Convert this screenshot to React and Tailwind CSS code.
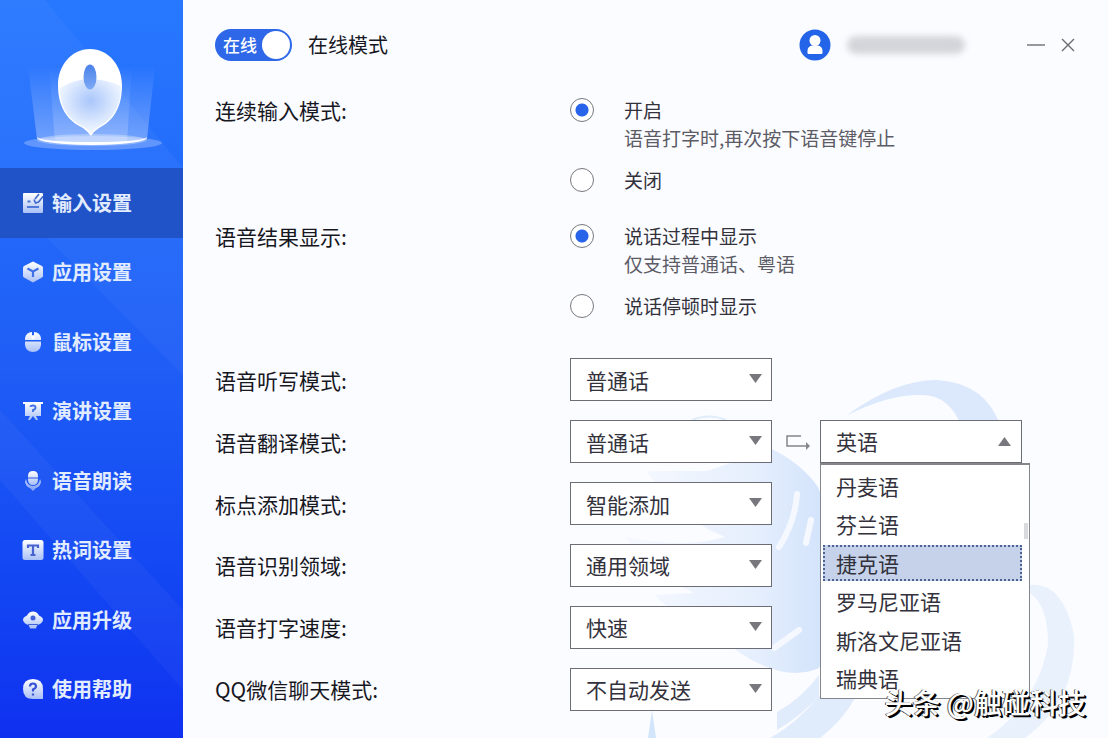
import { useState } from "react";
import clsx from "clsx";

const iconProps = {
  width: 22,
  height: 22,
  viewBox: "0 0 22 22",
  fill: "url(#iconFill)",
  "aria-hidden": true,
};

const icons = {
  input: (
    <svg {...iconProps}>
      <rect x="1" y="1" width="20" height="20" rx="1" />
      <path d="M5 15h12" stroke="#5078d8" strokeWidth="2" />
      <path d="M5.500 9.500h3" stroke="#4a70d0" strokeWidth="2" />
      <path d="m12 7.500 1.500 3.500 3-1L21 4.500M13 7l4-5" stroke="#3f68cc" strokeWidth="1.600" fill="none" />
    </svg>
  ),
  cube: (
    <svg {...iconProps}>
      <path d="M11 0.500 20 5Q21 5.500 21 7v8q0 1-1 1.500L11 21.500 2 16.500Q1 16 1 15V7Q1 5.500 2 5Z" />
      <path d="m5.500 7.500 5.500 3 5.500-3M11 10.500V16" stroke="#3f70e6" strokeWidth="2.200" fill="none" />
    </svg>
  ),
  mouse: (
    <svg {...iconProps}>
      <path d="M10 1v8H3V7q1-5.500 7-6ZM12 1v8h7V7q-1-5.500-7-6ZM3 10.500h16V14q-1 7-8 7t-8-7Z" />
      <rect x="9.500" y="4" width="3" height="5" rx="1.500" fill="#fff" />
    </svg>
  ),
  board: (
    <svg {...iconProps}>
      <path d="M1 2h20v2h-2v12h-5l2 4h-2l-3-4-3 4H6l2-4H3V4H1Z" />
      <path d="M8.500 7q0-1.500 2.500-1.500T13.500 7.500 11 10v2" stroke="#3f70e6" strokeWidth="1.800" fill="none" />
    </svg>
  ),
  mic: (
    <svg {...iconProps}>
      <path d="M11 1q5 0 5 5v3q0 6-5 6t-5-6V6q0-5 5-5Z" />
      <path d="M4 9q1 7 7 7t7-7l1 3q-1 5-5 6l-3 3-3-3q-4-1-5-6Z" opacity=".7" />
      <path d="M6 8h10" stroke="#4a70e6" strokeWidth="1.200" />
    </svg>
  ),
  text: (
    <svg {...iconProps}>
      <rect x="0.500" y="1" width="21" height="20" rx="2.500" />
      <path d="M6 9V6.500h10V9M11 6.500V16M8.500 16h5" stroke="#4863d0" strokeWidth="2.200" fill="none" />
    </svg>
  ),
  upgrade: (
    <svg {...iconProps}>
      <path d="M11 2.500q4 0 6 4 4 2 4 4 0 3-4 5l-2 1-1 3H8l-1-3-2-1q-4-2-4-5 0-2 4-4 2-4 6-4Z" />
      <circle cx="11" cy="9" r="2.500" fill="#4263dc" />
      <path d="M6 15.500h10" stroke="#4263dc" strokeWidth="1" />
    </svg>
  ),
  help: (
    <svg {...iconProps}>
      <path d="M11 1q10 0 10 10v10H11Q1 21 1 11T11 1Z" />
      <path d="M8 8.500Q8 5.500 11 5.500T14 8.500Q14 10 11 11.500V13.500M11 15.500v2" stroke="#3552d4" strokeWidth="2.200" fill="none" />
    </svg>
  ),
};

const menu = [
  { icon: "input", label: "输入设置" },
  { icon: "cube", label: "应用设置" },
  { icon: "mouse", label: "鼠标设置" },
  { icon: "board", label: "演讲设置" },
  { icon: "mic", label: "语音朗读" },
  { icon: "text", label: "热词设置" },
  { icon: "upgrade", label: "应用升级" },
  { icon: "help", label: "使用帮助" },
];

const radioGroups = [
  {
    name: "continuous",
    label: "连续输入模式:",
    options: [
      { label: "开启", hint: "语音打字时,再次按下语音键停止" },
      { label: "关闭" },
    ],
  },
  {
    name: "result",
    label: "语音结果显示:",
    options: [
      { label: "说话过程中显示", hint: "仅支持普通话、粤语" },
      { label: "说话停顿时显示" },
    ],
  },
];

const selects = [
  { id: "dictation", label: "语音听写模式:", value: "普通话" },
  { id: "translate", label: "语音翻译模式:", value: "普通话", target: true },
  { id: "punctuation", label: "标点添加模式:", value: "智能添加" },
  { id: "domain", label: "语音识别领域:", value: "通用领域" },
  { id: "speed", label: "语音打字速度:", value: "快速" },
  { id: "chat", label: "QQ微信聊天模式:", value: "不自动发送" },
];

const languages = ["丹麦语", "芬兰语", "捷克语", "罗马尼亚语", "斯洛文尼亚语", "瑞典语"];

function Logo() {
  return (
    <svg width="142" height="112" viewBox="22 44 142 112" aria-hidden="true">
      <defs>
        <linearGradient id="beam" x1="0" y1="0" x2="0" y2="1">
          <stop offset="0" stopColor="#fff" stopOpacity="0" />
          <stop offset="1" stopColor="#fff" stopOpacity=".35" />
        </linearGradient>
        <radialGradient id="body" cx=".5" cy=".4" r=".6">
          <stop offset="0" stopColor="#a9c6fb" />
          <stop offset="1" stopColor="#f6faff" />
        </radialGradient>
        <linearGradient id="wheel" x1="0" y1="0" x2="0" y2="1">
          <stop offset="0" stopColor="#4b82e8" />
          <stop offset="1" stopColor="#7daaf6" />
        </linearGradient>
      </defs>
      <ellipse cx="94" cy="143" rx="69" ry="7" fill="#fff" opacity=".25" />
      <path d="M29 66 38 139q55 12 110 0l8-73Z" fill="url(#beam)" />
      <path d="M50 66l6 76h72l5-76Z" fill="url(#beam)" opacity=".6" />
      <ellipse cx="93" cy="140" rx="55" ry="6" fill="#fff" opacity=".3" />
      <path d="M38 137q0 7 55 8 55-1 55-8-4 5-55 5-51 0-55-5Z" fill="#fff" />
      <path d="M91 49c19 0 32 17 32 36 0 23-9 36-23 43q-5 3-8 8-4-5-8-8C69 121 59 108 59 85c0-19 13-36 32-36Z" fill="#fff" />
      <path d="M61 88q15-9 30-9t31 7c0 22-9 34-23 41q-4 2-7 7-3-5-7-7C70 120 61 108 61 88Z" fill="url(#body)" />
      <ellipse cx="91" cy="77" rx="6.500" ry="12.500" fill="url(#wheel)" />
    </svg>
  );
}

function Sidebar({ active, onSelect }) {
  return (
    <aside className="relative flex w-[183px] shrink-0 flex-col bg-gradient-to-b from-[#2878ff] via-[#1f5df6] to-[#1030f0] pb-3.5">
      <svg className="absolute inset-0 h-full w-full" viewBox="0 0 183 738" preserveAspectRatio="none" aria-hidden="true">
        <defs>
          <linearGradient id="iconFill" x1="0" y1="0" x2="0" y2="1">
            <stop offset="0" stopColor="#fff" />
            <stop offset="1" stopColor="#a9c0f7" />
          </linearGradient>
        </defs>
        <path d="M0 0h45l138 168v70L0 55ZM0 190 183 375V238L0 55ZM0 480l183 210V610L0 410Z" fill="#fff" opacity=".035" />
      </svg>
      <div className="relative flex h-[168px] shrink-0 items-end justify-center pb-3">
        <Logo />
      </div>
      <nav className="relative flex flex-1 flex-col">
        {menu.map((item, i) => (
          <a
            key={item.label}
            href={`#${item.icon}`}
            onClick={() => onSelect(i)}
            className={clsx(
              "flex flex-1 items-center gap-2 pl-[22px] text-xl font-bold text-[#e2ecff]",
              i === active && "bg-[#2053c8]"
            )}
          >
            {icons[item.icon]}
            {item.label}
          </a>
        ))}
      </nav>
    </aside>
  );
}

function Swirls() {
  return (
    <svg className="pointer-events-none absolute right-0 bottom-0" width="548" height="398" viewBox="560 340 548 398" aria-hidden="true">
      <defs>
        <linearGradient id="blob" x1="0" y1="0" x2="1" y2="0">
          <stop offset="0" stopColor="#f6f9ff" />
          <stop offset=".6" stopColor="#e6effd" />
          <stop offset="1" stopColor="#cfe1fb" />
        </linearGradient>
      </defs>
      <path d="M846 416q48-36 91-36 50 3 64 48h-39q-12-33-40-33-34-1-76 21Z" fill="#dce9fc" />
      <path d="M647 471h60l65-22q30 15 46 38 40 100 1 181-18 8-40 3-35-10-60-36-40-15-65-40l40-2q-50-25-69-56 60 12 100 0-50-20-78-66Z" fill="url(#blob)" />
      <path d="M797 494q-2 28-18 53M811 520l-5 23M774 648l25-18" stroke="#f5f9ff" strokeWidth="6" strokeLinecap="round" fill="none" />
      <path d="M692 420q18-7 34 0" stroke="#e0edfb" strokeWidth="2" fill="none" />
      <path d="M819 675q-18 24-42 37v18q24-14 42-34ZM770 738q26-14 49-42l36 2q-12 22-35 40Z" fill="#e0ebfc" />
      <path d="M1030 585q33-3 44 50 3 65-49 103h-38q50-34 61-93 0-40-18-52Z" fill="#e9f1fd" />
      <path d="m652 710-4 28h8Z" fill="#d3e5fa" />
    </svg>
  );
}

function LanguagePicker() {
  const [open, setOpen] = useState(true);
  const [current, setCurrent] = useState("捷克语");

  return (
    <div className="relative">
      <button
        type="button"
        aria-haspopup="listbox"
        aria-expanded={open}
        onClick={() => setOpen(!open)}
        className="flex h-[43px] w-[202px] items-center justify-between border border-[#6c6c74] bg-white pr-2.5 pl-[15px] text-[21px]"
      >
        英语
        <svg width="13" height="9" viewBox="0 0 13 9" aria-hidden="true">
          <path d="M6.500 0 13 9H0Z" fill="#77777d" />
        </svg>
      </button>
      {open && (
        <ul
          role="listbox"
          aria-label="翻译语言"
          className="absolute top-full left-0 z-10 flex h-[236px] w-[210px] flex-col border border-t-2 border-[#85858c] bg-white pt-0.5"
        >
          {languages.map((lang) => (
            <li
              key={lang}
              role="option"
              aria-selected={lang === current}
              onClick={() => setCurrent(lang)}
              className="flex flex-1 cursor-default items-center pr-[7px] pl-0.5 text-[21px]"
            >
              <span
                className={clsx(
                  "flex h-9 flex-1 items-center border-2 border-dotted pl-[11px] leading-none",
                  lang === current ? "border-[#4c6391] bg-[#c5d2ea]" : "border-transparent"
                )}
              >
                {lang}
              </span>
            </li>
          ))}
          <li role="presentation" className="absolute top-[58px] right-px h-4 w-1 bg-[#d8dade]" />
        </ul>
      )}
    </div>
  );
}

export default function App() {
  const [active, setActive] = useState(0);
  const [online, setOnline] = useState(true);

  return (
    <div className="flex min-h-screen bg-[#fbfcff] font-['Noto_Sans_CJK_SC',sans-serif] text-[#33323c]">
      <Sidebar active={active} onSelect={setActive} />

      <main className="relative flex flex-1 flex-col pb-[18px] pl-8">
        <Swirls />

        <header className="relative mt-[29px] flex h-8 items-center pr-8">
          <button
            type="button"
            role="switch"
            aria-checked={online}
            aria-labelledby="mode"
            onClick={() => setOnline(!online)}
            className="flex h-8 w-[77px] items-center justify-between rounded-full bg-[#2e68e8] pr-0.5 pl-2 text-[17px] font-medium text-white"
          >
            在线
            <span className="size-7 rounded-full bg-white" />
          </button>
          <span id="mode" className="ml-4 text-xl text-[#17171f]">在线模式</span>

          <div className="ml-auto flex items-center">
            <svg width="32" height="32" viewBox="0 0 32 32" aria-hidden="true">
              <circle cx="16" cy="16" r="15.500" fill="#2464e8" />
              <circle cx="16" cy="11.500" r="5.500" fill="#fff" />
              <path d="M8.500 24v-2q0-5 5-5.500h5q5 .5 5 5.500v2q0 1-1 1h-13q-1 0-1-1Z" fill="#fff" />
            </svg>
            {/* Account name, masked */}
            <span className="ml-4 h-[18px] w-[118px] rounded-full bg-[#d3d5da] blur-[3px]" />
            <button type="button" aria-label="最小化" className="ml-[61px] flex h-8 w-5 items-center justify-center">
              <svg width="18" height="2" aria-hidden="true">
                <path d="M0 1h18" stroke="#77777b" strokeWidth="1.500" />
              </svg>
            </button>
            <button type="button" aria-label="关闭窗口" className="ml-3.5 flex h-8 w-4 items-center justify-center">
              <svg width="14" height="14" aria-hidden="true">
                <path d="m1 1 12 12M13 1 1 13" stroke="#6c6c70" strokeWidth="1.400" />
              </svg>
            </button>
          </div>
        </header>

        <div className="relative mt-[35px] flex flex-col gap-7">
          {radioGroups.map((group) => (
            <div key={group.name} role="radiogroup" aria-labelledby={group.name} className="flex">
              <span id={group.name} className="w-[355px] shrink-0 text-[21px] leading-7 text-[#17171f]">
                {group.label}
              </span>
              <div className="flex flex-col gap-3.5">
                {group.options.map((option, i) => (
                  <label key={option.label} className="flex gap-[30px] text-[19px] leading-7">
                    <input
                      type="radio"
                      name={group.name}
                      defaultChecked={i === 0}
                      className="mt-0.5 size-6 shrink-0 appearance-none rounded-full border border-[#77777d] bg-white checked:bg-[radial-gradient(circle,#2864ea_6px,#fff_7px)]"
                    />
                    <span>
                      {option.label}
                      {option.hint && <span className="block text-[#5c5b66]">{option.hint}</span>}
                    </span>
                  </label>
                ))}
              </div>
            </div>
          ))}
        </div>

        <div className="relative mt-[29px] flex flex-1 flex-col">
          {selects.map((field) => (
            <div key={field.id} className="flex flex-1 items-center">
              <label htmlFor={field.id} className="w-[355px] shrink-0 text-[21px] leading-7 text-[#17171f]">
                {field.label}
              </label>
              <div className="relative">
                <select
                  id={field.id}
                  className="block h-[43px] w-[202px] appearance-none border border-[#6c6c74] bg-white pl-[15px] text-[21px] leading-7"
                >
                  <option>{field.value}</option>
                </select>
                <svg className="pointer-events-none absolute top-4 right-2.5" width="13" height="9" viewBox="0 0 13 9" aria-hidden="true">
                  <path d="M0 0h13L6.500 9Z" fill="#77777d" />
                </svg>
              </div>
              {field.target && (
                <>
                  <svg className="mr-2.5 ml-3.5" width="24" height="16" viewBox="0 0 24 16" fill="none" aria-hidden="true">
                    <path d="M15 2H1v10h19" stroke="#85858b" strokeWidth="1.500" />
                    <path d="m20 8 4 4-4 4Z" fill="#85858b" />
                  </svg>
                  <LanguagePicker />
                </>
              )}
            </div>
          ))}
        </div>

        <p className="absolute right-[22px] bottom-4 z-20 text-[28px] leading-10 font-medium text-white [text-shadow:-1px_0_0_#555,1px_1px_0_#000,2px_2px_0_#000]">
          头条 @触碰科技
        </p>
      </main>
    </div>
  );
}
